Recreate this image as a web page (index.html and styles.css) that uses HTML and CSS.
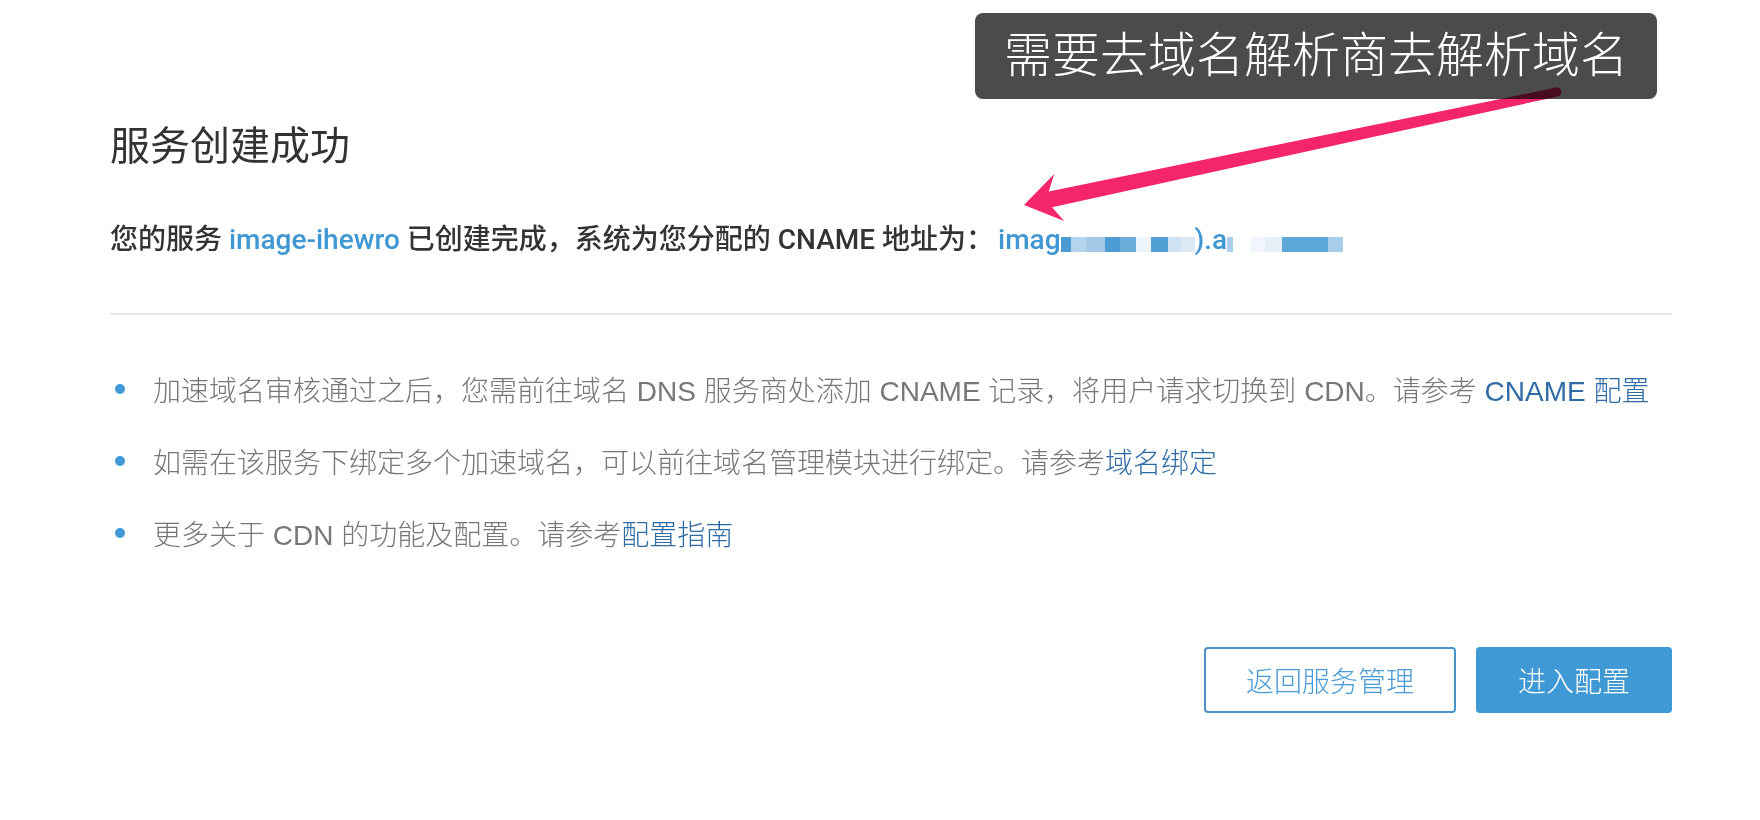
FILE: index.html
```html
<!DOCTYPE html>
<html lang="zh-CN">
<head>
<meta charset="utf-8">
<title>服务创建成功</title>
<link rel="stylesheet" href="styles.css">
</head>
<body>
<div class="page">
  <h1 class="title">服务创建成功</h1>
  <p class="summary">您的服务 <a class="svc-link" href="#">image-ihewro</a> 已创建完成，系统为您分配的 CNAME 地址为：<span class="cname">imag<span class="blur"><i style="width:10px;background:#4a9bd2"></i><i style="width:15px;background:#b3d4ec"></i><i style="width:19px;background:#a3cbe8"></i><i style="width:15px;background:#4d9cd3"></i><i style="width:16px;background:#6aaedc"></i><i style="width:15px;background:#eef5fb"></i><i style="width:17px;background:#4f9ed4"></i><i style="width:13px;background:#cfe3f3"></i><i style="width:14px;background:#dce9f5"></i></span>).a<span class="blur"><i style="width:6px;background:#a9cfea"></i><i style="width:17px;background:#ffffff"></i><i style="width:15px;background:#f0f6fb"></i><i style="width:17px;background:#e6f0f8"></i><i style="width:46px;background:#5ea7d9"></i><i style="width:15px;background:#a8cfea"></i></span></span></p>
  <hr class="divider">
  <ul class="tips">
    <li class="tip"><span class="dot"></span><span class="tip-text">加速域名审核通过之后，您需前往域名 DNS 服务商处添加 CNAME 记录，将用户请求切换到 CDN。请参考 <a class="doc-link" href="#">CNAME 配置</a></span></li>
    <li class="tip"><span class="dot"></span><span class="tip-text">如需在该服务下绑定多个加速域名，可以前往域名管理模块进行绑定。请参考<a class="doc-link" href="#">域名绑定</a></span></li>
    <li class="tip"><span class="dot"></span><span class="tip-text">更多关于 CDN 的功能及配置。请参考<a class="doc-link" href="#">配置指南</a></span></li>
  </ul>
  <div class="actions">
    <button class="btn btn-outline" type="button">返回服务管理</button>
    <button class="btn btn-primary" type="button">进入配置</button>
  </div>

  <div class="callout">需要去域名解析商去解析域名</div>
  <svg class="arrow" width="1760" height="820" viewBox="0 0 1760 820" xmlns="http://www.w3.org/2000/svg">
    <path d="M1024 205 L1054.24 174.05 L1048.75 191.57 L1556.07 87.60 A4.5 4.5 0 0 1 1557.93 96.40 L1052.07 207.23 L1064.20 221.01 Z" fill="#f5256b"/>
  </svg>
</div>
</body>
</html>
```

FILE: styles.css
```css
html, body {
  margin: 0;
  padding: 0;
  background: #ffffff;
}

body {
  font-family: "Liberation Sans", "Noto Sans CJK SC", sans-serif;
  color: #333333;
}

.page {
  position: relative;
  width: 1760px;
  height: 820px;
  box-sizing: border-box;
  padding: 118px 88px 0 110px;
  overflow: hidden;
}

.title {
  margin: 0;
  font-size: 40px;
  line-height: 56px;
  font-weight: 400;
  color: #333333;
}

.summary {
  margin: 46px 0 0;
  font-family: Roboto, "Noto Sans CJK SC", sans-serif;
  font-size: 28px;
  line-height: 40px;
  font-weight: 500;
  color: #333333;
  white-space: nowrap;
}

.svc-link {
  color: #3f98d4;
  text-decoration: none;
}

.cname {
  color: #3f98d4;
  margin-left: 4px;
}

.blur {
  display: inline-flex;
  vertical-align: -3px;
  height: 15px;
}

.blur i {
  display: block;
  height: 15px;
}

.divider {
  margin: 53px 0 0;
  border: 0;
  height: 2px;
  background: #e8e8e8;
}

.tips {
  list-style: none;
  margin: 54px 0 0;
  padding: 0;
}

.tip {
  display: flex;
  align-items: center;
  height: 40px;
  margin-bottom: 32px;
  font-size: 28px;
  font-weight: 300;
  color: #777777;
  white-space: nowrap;
}

.tip:last-child {
  margin-bottom: 0;
}

.dot {
  width: 10px;
  height: 10px;
  border-radius: 50%;
  background: #3f99d5;
  margin: 0 28px 0 5px;
  flex: none;
}

.doc-link {
  color: #2f6ca6;
  text-decoration: none;
}

.actions {
  display: flex;
  justify-content: flex-end;
  gap: 20px;
  margin-top: 94px;
}

.btn {
  height: 66px;
  border-radius: 4px;
  font-family: "Liberation Sans", "Noto Sans CJK SC", sans-serif;
  font-size: 28px;
  font-weight: 300;
  cursor: pointer;
  box-sizing: border-box;
}

.btn-outline {
  width: 252px;
  background: #ffffff;
  border: 2px solid #4a93c6;
  color: #4a9cd6;
}

.btn-primary {
  width: 196px;
  background: #3f99d5;
  border: 0;
  color: #ffffff;
}

.callout {
  position: absolute;
  left: 975px;
  top: 13px;
  width: 682px;
  height: 86px;
  box-sizing: border-box;
  border-radius: 8px;
  background: #4b4b4b;
  color: #ffffff;
  font-size: 48px;
  font-weight: 300;
  line-height: 86px;
  text-align: center;
  white-space: nowrap;
}

.arrow {
  position: absolute;
  left: 0;
  top: 0;
  pointer-events: none;
  mix-blend-mode: multiply;
}
```
